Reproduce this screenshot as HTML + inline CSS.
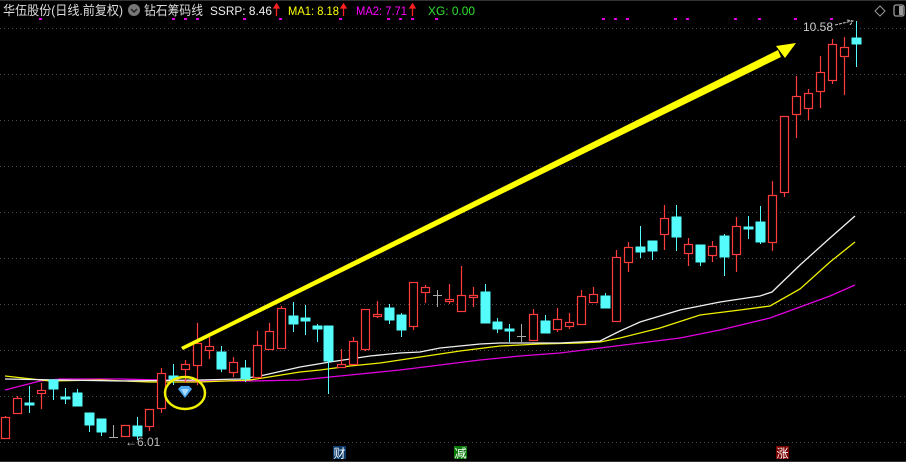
<!DOCTYPE html>
<html><head><meta charset="utf-8"><style>
body{margin:0;background:#000;width:906px;height:462px;overflow:hidden;font-family:"Liberation Sans","Noto Sans CJK SC",sans-serif}
</style></head><body>
<svg width="906" height="462" xmlns="http://www.w3.org/2000/svg" style="position:absolute;left:0;top:0">
<rect width="906" height="462" fill="#000"/>
<line x1="0" y1="0.5" x2="906" y2="0.5" stroke="#333"/>
<line x1="0" y1="461.5" x2="906" y2="461.5" stroke="#333"/>
<g stroke="#4a4a4a" stroke-dasharray="1 3">
<line x1="0" y1="28.5" x2="906" y2="28.5"/><line x1="0" y1="74.5" x2="906" y2="74.5"/><line x1="0" y1="120.5" x2="906" y2="120.5"/><line x1="0" y1="166.5" x2="906" y2="166.5"/><line x1="0" y1="212.5" x2="906" y2="212.5"/><line x1="0" y1="258.5" x2="906" y2="258.5"/><line x1="0" y1="304.5" x2="906" y2="304.5"/><line x1="0" y1="350.5" x2="906" y2="350.5"/><line x1="0" y1="396.5" x2="906" y2="396.5"/><line x1="0" y1="442.5" x2="906" y2="442.5"/>
</g>
<g fill="#e000e0">
<rect x="39" y="18" width="3" height="2"/><rect x="172" y="18" width="3" height="2"/><rect x="184" y="18" width="3" height="2"/><rect x="196" y="18" width="3" height="2"/><rect x="243" y="18" width="3" height="2"/><rect x="279" y="18" width="3" height="2"/><rect x="339" y="18" width="3" height="2"/><rect x="387" y="18" width="3" height="2"/><rect x="399" y="18" width="3" height="2"/><rect x="411" y="18" width="3" height="2"/><rect x="435" y="18" width="3" height="2"/><rect x="602" y="18" width="3" height="2"/><rect x="614" y="18" width="3" height="2"/><rect x="626" y="18" width="3" height="2"/><rect x="674" y="18" width="3" height="2"/><rect x="686" y="18" width="3" height="2"/><rect x="734" y="18" width="3" height="2"/><rect x="758" y="18" width="3" height="2"/><rect x="794" y="18" width="3" height="2"/><rect x="830" y="18" width="3" height="2"/>
</g>
<polyline fill="none" stroke="#e000e0" stroke-width="1.3" points="5,390 40,381 60,379 120,379 200,381 250,381 300,380 320,378 360,374 400,370 440,365 480,360 520,356 560,353 600,348 640,343 680,338 720,330 770,318 800,307 830,296 855,285"/>
<polyline fill="none" stroke="#f0f000" stroke-width="1.3" points="5,376 50,381 100,380 150,382 200,382 250,380 300,372 320,370 350,366 380,363 420,357 460,351 500,346 540,344 580,343 600,342 620,338 660,328 700,315 740,310 770,306 800,289 830,262 855,242"/>
<polyline fill="none" stroke="#f0f0f0" stroke-width="1.3" points="5,379 60,380 120,381 200,380 240,379 260,376 300,367 330,362 370,356 400,353 420,352 440,348 480,344 500,343 560,343 600,341 620,331 640,322 680,310 720,302 760,296 772,292 800,265 830,238 855,216"/>
<g stroke="#54fcfc" fill="#54fcfc">
<line x1="29.5" y1="386" x2="29.5" y2="413"/><rect x="25" y="403" width="9" height="2"/>
<line x1="53.5" y1="379" x2="53.5" y2="400"/><rect x="49" y="380" width="9" height="9"/>
<line x1="65.5" y1="388" x2="65.5" y2="404"/><rect x="61" y="397" width="9" height="2"/>
<line x1="77.5" y1="389" x2="77.5" y2="406"/><rect x="73" y="393" width="9" height="13"/>
<line x1="89.5" y1="413" x2="89.5" y2="432"/><rect x="85" y="413" width="9" height="12"/>
<line x1="101.5" y1="419" x2="101.5" y2="436"/><rect x="97" y="419" width="9" height="13"/>
<line x1="137.5" y1="417" x2="137.5" y2="440"/><rect x="133" y="426" width="9" height="10"/>
<line x1="173.5" y1="364" x2="173.5" y2="385"/><rect x="169" y="376" width="9" height="3"/>
<line x1="221.5" y1="346" x2="221.5" y2="372"/><rect x="217" y="352" width="9" height="17"/>
<line x1="245.5" y1="360" x2="245.5" y2="382"/><rect x="241" y="368" width="9" height="11"/>
<line x1="293.5" y1="302" x2="293.5" y2="332"/><rect x="289" y="316" width="9" height="8"/>
<line x1="305.5" y1="305" x2="305.5" y2="335"/><rect x="301" y="318" width="9" height="3"/>
<line x1="317.5" y1="324" x2="317.5" y2="342"/><rect x="313" y="326" width="9" height="3"/>
<line x1="328.5" y1="326" x2="328.5" y2="394"/><rect x="324" y="326" width="9" height="35"/>
<line x1="389.5" y1="304" x2="389.5" y2="324"/><rect x="385" y="308" width="9" height="12"/>
<line x1="401.5" y1="313" x2="401.5" y2="337"/><rect x="397" y="315" width="9" height="15"/>
<line x1="485.5" y1="284" x2="485.5" y2="323"/><rect x="481" y="292" width="9" height="31"/>
<line x1="497.5" y1="318" x2="497.5" y2="333"/><rect x="493" y="322" width="9" height="7"/>
<line x1="509.5" y1="324" x2="509.5" y2="342"/><rect x="505" y="329" width="9" height="2"/>
<line x1="545.5" y1="315" x2="545.5" y2="333"/><rect x="541" y="321" width="9" height="12"/>
<line x1="605.5" y1="293" x2="605.5" y2="308"/><rect x="601" y="296" width="9" height="12"/>
<line x1="640.5" y1="226" x2="640.5" y2="258"/><rect x="636" y="247" width="9" height="5"/>
<line x1="652.5" y1="241" x2="652.5" y2="260"/><rect x="648" y="241" width="9" height="10"/>
<line x1="676.5" y1="205" x2="676.5" y2="251"/><rect x="672" y="217" width="9" height="20"/>
<line x1="700.5" y1="245" x2="700.5" y2="266"/><rect x="696" y="245" width="9" height="17"/>
<line x1="724.5" y1="234" x2="724.5" y2="276"/><rect x="720" y="236" width="9" height="21"/>
<line x1="748.5" y1="216" x2="748.5" y2="239"/><rect x="744" y="227" width="9" height="2"/>
<line x1="760.5" y1="206" x2="760.5" y2="244"/><rect x="756" y="222" width="9" height="20"/>
<line x1="856.5" y1="21" x2="856.5" y2="67"/><rect x="852" y="38" width="9" height="6"/>
</g>
<g stroke="#aaa">
<line x1="113.5" y1="425" x2="113.5" y2="437"/><line x1="109" y1="437.5" x2="118" y2="437.5"/>
<line x1="437.5" y1="290" x2="437.5" y2="307"/><line x1="433" y1="295.5" x2="442" y2="295.5"/>
<line x1="521.5" y1="324" x2="521.5" y2="343"/><line x1="517" y1="336.5" x2="526" y2="336.5"/>
</g>
<g stroke="#ff3c3c" stroke-width="1.2" fill="#000">
<line x1="5.5" y1="416" x2="5.5" y2="439"/><rect x="1.5" y="417.5" width="8" height="21"/>
<line x1="17.5" y1="396" x2="17.5" y2="414"/><rect x="13.5" y="398.5" width="8" height="15"/>
<line x1="41.5" y1="383" x2="41.5" y2="409"/><rect x="37.5" y="390.5" width="8" height="3"/>
<line x1="125.5" y1="425" x2="125.5" y2="437"/><rect x="121.5" y="425.5" width="8" height="11"/>
<line x1="149.5" y1="409" x2="149.5" y2="431"/><rect x="145.5" y="409.5" width="8" height="17"/>
<line x1="161.5" y1="368" x2="161.5" y2="413"/><rect x="157.5" y="373.5" width="8" height="35"/>
<line x1="185.5" y1="360" x2="185.5" y2="383"/><rect x="181.5" y="364.5" width="8" height="5"/>
<line x1="197.5" y1="323" x2="197.5" y2="385"/><rect x="193.5" y="343.5" width="8" height="22"/>
<line x1="209.5" y1="337" x2="209.5" y2="359"/><rect x="205.5" y="346.5" width="8" height="4"/>
<line x1="233.5" y1="357" x2="233.5" y2="377"/><rect x="229.5" y="362.5" width="8" height="10"/>
<line x1="257.5" y1="331" x2="257.5" y2="378"/><rect x="253.5" y="345.5" width="8" height="32"/>
<line x1="269.5" y1="323" x2="269.5" y2="349"/><rect x="265.5" y="331.5" width="8" height="18"/>
<line x1="281.5" y1="306" x2="281.5" y2="349"/><rect x="277.5" y="308.5" width="8" height="40"/>
<line x1="341.5" y1="349" x2="341.5" y2="368"/><rect x="337.5" y="364.5" width="8" height="3"/>
<line x1="353.5" y1="337" x2="353.5" y2="364"/><rect x="349.5" y="341.5" width="8" height="23"/>
<line x1="365.5" y1="309" x2="365.5" y2="351"/><rect x="361.5" y="309.5" width="8" height="40"/>
<line x1="377.5" y1="301" x2="377.5" y2="318"/><rect x="373.5" y="314.5" width="8" height="2"/>
<line x1="413.5" y1="282" x2="413.5" y2="330"/><rect x="409.5" y="282.5" width="8" height="44"/>
<line x1="425.5" y1="285" x2="425.5" y2="303"/><rect x="421.5" y="287.5" width="8" height="5"/>
<line x1="449.5" y1="284" x2="449.5" y2="304"/><rect x="445.5" y="299.5" width="8" height="2"/>
<line x1="461.5" y1="266" x2="461.5" y2="311"/><rect x="457.5" y="295.5" width="8" height="16"/>
<line x1="473.5" y1="287" x2="473.5" y2="307"/><rect x="469.5" y="295.5" width="8" height="2"/>
<line x1="533.5" y1="309" x2="533.5" y2="340"/><rect x="529.5" y="314.5" width="8" height="26"/>
<line x1="557.5" y1="308" x2="557.5" y2="332"/><rect x="553.5" y="319.5" width="8" height="10"/>
<line x1="569.5" y1="313" x2="569.5" y2="329"/><rect x="565.5" y="322.5" width="8" height="4"/>
<line x1="581.5" y1="290" x2="581.5" y2="324"/><rect x="577.5" y="296.5" width="8" height="28"/>
<line x1="593.5" y1="287" x2="593.5" y2="303"/><rect x="589.5" y="294.5" width="8" height="8"/>
<line x1="616.5" y1="250" x2="616.5" y2="322"/><rect x="612.5" y="257.5" width="8" height="64"/>
<line x1="628.5" y1="242" x2="628.5" y2="272"/><rect x="624.5" y="247.5" width="8" height="15"/>
<line x1="664.5" y1="205" x2="664.5" y2="250"/><rect x="660.5" y="218.5" width="8" height="16"/>
<line x1="688.5" y1="238" x2="688.5" y2="266"/><rect x="684.5" y="244.5" width="8" height="9"/>
<line x1="712.5" y1="241" x2="712.5" y2="262"/><rect x="708.5" y="246.5" width="8" height="9"/>
<line x1="736.5" y1="217" x2="736.5" y2="272"/><rect x="732.5" y="226.5" width="8" height="28"/>
<line x1="772.5" y1="181" x2="772.5" y2="251"/><rect x="768.5" y="195.5" width="8" height="47"/>
<line x1="784.5" y1="116" x2="784.5" y2="197"/><rect x="780.5" y="116.5" width="8" height="76"/>
<line x1="796.5" y1="76" x2="796.5" y2="138"/><rect x="792.5" y="96.5" width="8" height="18"/>
<line x1="808.5" y1="89" x2="808.5" y2="120"/><rect x="804.5" y="93.5" width="8" height="15"/>
<line x1="820.5" y1="56" x2="820.5" y2="108"/><rect x="816.5" y="72.5" width="8" height="19"/>
<line x1="832.5" y1="39" x2="832.5" y2="84"/><rect x="828.5" y="44.5" width="8" height="36"/>
<line x1="844.5" y1="37" x2="844.5" y2="95"/><rect x="840.5" y="47.5" width="8" height="9"/>
</g>
<polygon fill="#ffff00" points="181,347 778,50 781,57 183,350"/>
<polygon fill="#ffff00" points="776,46 796,43 785,58"/>
<ellipse cx="185" cy="393" rx="20" ry="16" fill="none" stroke="#f0f000" stroke-width="2.5"/>
<polygon points="178,389 181,386 189,386 192,389 185,398" fill="#4aa8f0"/>
<polygon points="181,389 189,389 185,396" fill="#a8dcff"/>
<text x="125" y="446" fill="#bbb" font-size="12">←6.01</text>
<text x="803" y="31" fill="#ccc" font-size="12">10.58</text>
<path d="M835,25 L852,21 M847,20 L853,21 L850,25" stroke="#ccc" fill="none" stroke-dasharray="3 1"/>
<rect x="333" y="446" width="13" height="13" fill="#0a3a6a"/><text x="333.5" y="457.5" fill="#fff" font-size="12">财</text>
<rect x="454" y="446" width="13" height="13" fill="#0a7a0a"/><text x="454.5" y="457.5" fill="#fff" font-size="12">减</text>
<rect x="776" y="446" width="13" height="13" fill="#7a0000"/><text x="776.5" y="457.5" fill="#fff" font-size="12">涨</text>
<text x="3" y="15" fill="#ddd" font-size="13" textLength="120" lengthAdjust="spacingAndGlyphs">华伍股份(日线.前复权)</text>
<circle cx="134" cy="10" r="6" fill="#777"/><path d="M131,9 L134,12 L137,9" stroke="#222" stroke-width="1.5" fill="none"/>
<text x="144" y="15" fill="#ddd" font-size="13" textLength="59" lengthAdjust="spacingAndGlyphs">钻石筹码线</text>
<text x="210" y="15" fill="#eee" font-size="12" textLength="62" lengthAdjust="spacingAndGlyphs">SSRP: 8.46</text>
<text x="288" y="15" fill="#ffff00" font-size="12" textLength="51" lengthAdjust="spacingAndGlyphs">MA1: 8.18</text>
<text x="356" y="15" fill="#ff00ff" font-size="12" textLength="51" lengthAdjust="spacingAndGlyphs">MA2: 7.71</text>
<text x="428" y="15" fill="#30e030" font-size="12" textLength="47" lengthAdjust="spacingAndGlyphs">XG: 0.00</text>
<g stroke="#ff2020" stroke-width="1.3" fill="#ff2020">
<line x1="276.5" y1="6" x2="276.5" y2="16"/><polygon points="274,8 276.5,4 279,8"/>
<line x1="343.5" y1="6" x2="343.5" y2="16"/><polygon points="341,8 343.5,4 346,8"/>
<line x1="412.5" y1="6" x2="412.5" y2="16"/><polygon points="410,8 412.5,4 415,8"/>
</g>
<polygon points="880,6 885,11 880,16 875,11" fill="none" stroke="#999"/>
<rect x="894" y="5" width="10" height="11" rx="2" fill="none" stroke="#999" stroke-width="1.3"/><rect x="899" y="6" width="4" height="9" fill="#999"/>
</svg>
</body></html>
